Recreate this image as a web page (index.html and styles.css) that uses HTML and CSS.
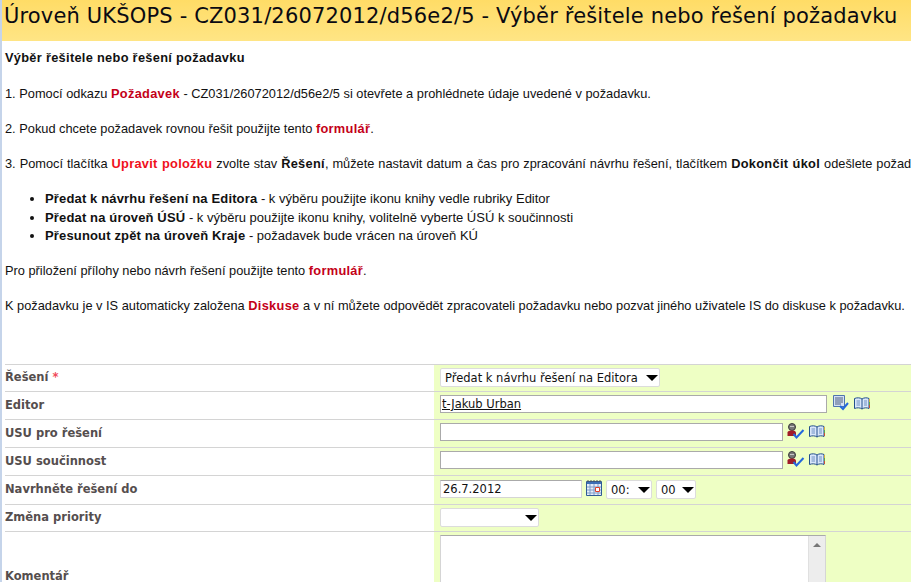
FILE: index.html
```html
<!DOCTYPE html>
<html lang="cs">

<head>
    <meta charset="UTF-8">
    <title>Výběr řešitele nebo řešení požadavku</title>
    <link rel="stylesheet" href="styles.css">
</head>

<body>
    <svg class="defs" width="0" height="0">
        <symbol id="ico-list" viewBox="0 0 17 16">
            <path d="M1.500.5h11v11h-11z" fill="#d3e0f5" stroke="#4f74ad"/>
            <path d="M3 3h8M3 5h8M3 7h8M3 9h6" stroke="#4d5f80"/>
            <path d="M8 11l3 3 5-6" fill="none" stroke="#2468dc" stroke-width="2"/>
        </symbol>
        <symbol id="ico-user" viewBox="0 0 18 16">
            <circle cx="5" cy="4" r="3.500" fill="#777" stroke="#3c3c3c"/>
            <path d="M3 3h4v1H3z" fill="#c8c8c8"/>
            <path d="M.5 13V9.500C.5 8 3 7.500 5 7.500S9 8 9 10v3z" fill="#a01c28"/>
            <path d="M6.500 11l3 3.500 7-7.500" fill="none" stroke="#2468dc" stroke-width="2"/>
        </symbol>
        <symbol id="ico-book" viewBox="0 0 16 13">
            <path d="M.5 1.500C3 .5 6 .5 8 2c2-1.500 5-1.500 7-.5v10c-2-1-5-1-7 .5-2-1.500-5-1.500-7.500-.5z" fill="#d9e6fa" stroke="#234f8c"/>
            <path d="M8 2v10" stroke="#234f8c"/>
            <path d="M2.500 4h3.500M2.500 6h3.500M2.500 8h3.500M10 4h3M10 6h3M10 8h3" stroke="#6f90c2"/>
            <path d="M15 2h1v3h-1z" fill="#d8b13a"/>
            <path d="M15 5h1v3h-1z" fill="#5aa84a"/>
            <path d="M15 8h1v3h-1z" fill="#c8503a"/>
        </symbol>
        <symbol id="ico-cal" viewBox="0 0 16 16">
            <path d="M.5 1.500h15v14H.5z" fill="#e6eefa" stroke="#2f5b96"/>
            <path d="M1 2h14v2H1z" fill="#3e6fb5"/>
            <path d="M2 0v2M5 0v2M8 0v2M11 0v2M14 0v2" stroke="#555"/>
            <path d="M1 7h14M1 10h14M1 13h14M4 4v11M8 4v11M12 4v11" stroke="#7e9cc8"/>
            <path d="M9.500 7.500h4v4h-4z" fill="#fff" stroke="#e0402a"/>
        </symbol>
    </svg>

    <div id="main">
        <h1 class="title">Úroveň UKŠOPS - CZ031/26072012/d56e2/5 - Výběr řešitele nebo řešení požadavku</h1>

        <div class="help">
            <p class="first"><b>Výběr řešitele nebo řešení požadavku</b></p>
            <p>1. Pomocí odkazu <a class="dark">Požadavek</a> - CZ031/26072012/d56e2/5 si otevřete a prohlédnete údaje uvedené v požadavku.</p>
            <p>2. Pokud chcete požadavek rovnou řešit použijte tento <a class="dark">formulář</a>.</p>
            <p class="long">3. Pomocí tlačítka <a class="bright">Upravit položku</a> zvolte stav <b>Řešení</b>, můžete nastavit datum a čas pro zpracování návrhu řešení, tlačítkem <b>Dokončit úkol</b> odešlete požadavek</p>
            <ul>
                <li><b>Předat k návrhu řešení na Editora</b> - k výběru použijte ikonu knihy vedle rubriky Editor</li>
                <li><b>Předat na úroveň ÚSÚ</b> - k výběru použijte ikonu knihy, volitelně vyberte ÚSÚ k součinnosti</li>
                <li><b>Přesunout zpět na úroveň Kraje</b> - požadavek bude vrácen na úroveň KÚ</li>
            </ul>
            <p>Pro přiložení přílohy nebo návrh řešení použijte tento <a class="dark">formulář</a>.</p>
            <p>K požadavku je v IS automaticky založena <a class="dark">Diskuse</a> a v ní můžete odpovědět zpracovateli požadavku nebo pozvat jiného uživatele IS do diskuse k požadavku.</p>
        </div>

        <div class="form">
            <div class="row h27">
                <div class="label">Řešení <span class="req">*</span></div>
                <div class="field">
                    <span class="select w220"><select><option>Předat k návrhu řešení na Editora</option></select></span>
                </div>
            </div>
            <div class="row h28">
                <div class="label">Editor</div>
                <div class="field">
                    <span class="input w387"><a class="person">t-Jakub Urban</a></span>
                    <svg class="icon ml5" width="17" height="16"><use href="#ico-list"/></svg>
                    <svg class="icon ml5 book" width="16" height="13"><use href="#ico-book"/></svg>
                </div>
            </div>
            <div class="row h28">
                <div class="label">USU pro řešení</div>
                <div class="field">
                    <span class="input w343"></span>
                    <svg class="icon ml4" width="18" height="16"><use href="#ico-user"/></svg>
                    <svg class="icon ml4 book" width="16" height="13"><use href="#ico-book"/></svg>
                </div>
            </div>
            <div class="row h28">
                <div class="label">USU součinnost</div>
                <div class="field">
                    <span class="input w343"></span>
                    <svg class="icon ml4" width="18" height="16"><use href="#ico-user"/></svg>
                    <svg class="icon ml4 book" width="16" height="13"><use href="#ico-book"/></svg>
                </div>
            </div>
            <div class="row h29 date">
                <div class="label">Navrhněte řešení do</div>
                <div class="field">
                    <span class="input w142 soft">26.7.2012</span>
                    <svg class="icon ml4" width="16" height="16"><use href="#ico-cal"/></svg>
                    <span class="select w46 ml4"><select><option>00:</option></select></span>
                    <span class="select w40 ml4"><select><option>00</option></select></span>
                </div>
            </div>
            <div class="row h27">
                <div class="label">Změna priority</div>
                <div class="field">
                    <span class="select w99"><select><option></option></select></span>
                </div>
            </div>
            <div class="row last">
                <div class="label">Komentář</div>
                <div class="field">
                    <div class="textarea"><div class="scroll"><i></i></div></div>
                </div>
            </div>
        </div>
    </div>
</body>

</html>
```

FILE: styles.css
```css
html,
body {
    margin: 0;
    padding: 0;
    height: 582px;
    overflow: hidden;
    background: #fff;
}

.defs {
    display: block;
    height: 0;
}

#main {
    width: 909px;
    height: 582px;
    overflow: hidden;
    border-left: 2px solid #c5d4ea;
    font-family: "Liberation Sans", Arial, sans-serif;
    font-size: 12.8px;
    color: #111;
}

.title {
    margin: 0;
    height: 41px;
    padding-left: 2px;
    background: linear-gradient(#ffdc66, #ffe585);
    font-family: "DejaVu Sans", Verdana, sans-serif;
    font-size: 21px;
    font-weight: normal;
    letter-spacing: .16px;
    line-height: 32px;
    color: #0a0a12;
    white-space: nowrap;
    overflow: hidden;
}

.help {
    padding: 8px 0 0 3px;
    height: 323px;
    box-sizing: border-box;
    line-height: 18px;
}

.help p {
    margin: 0 0 17px;
    white-space: nowrap;
}

.help .first {
    margin-bottom: 18px;
}

.help b,
.help a {
    letter-spacing: .3px;
}

.help .long {
    word-spacing: .4px;
}

.help ul {
    margin: 0 0 16px;
    padding-left: 40px;
}

.help li {
    font-size: 13px;
    line-height: 18.500px;
}

.help li b {
    letter-spacing: .15px;
}

.dark {
    color: #c40018;
    font-weight: bold;
}

.bright {
    color: #f0101c;
    font-weight: bold;
}

.form {
    margin-left: 3px;
    font-family: "DejaVu Sans", Verdana, sans-serif;
    font-size: 11.5px;
}

.row {
    display: grid;
    grid-template-columns: 429px 1fr;
    box-sizing: border-box;
    border-top: 1px solid #d4d4d4;
}

.h27 {
    height: 27px;
}

.h28 {
    height: 28px;
}

.h29 {
    height: 29px;
}

.last {
    height: 90px;
}

.label {
    display: flex;
    align-items: center;
    gap: 4px;
    color: #554e4e;
    font-weight: bold;
    padding-bottom: 2px;
}

.req {
    color: #f04a5a;
}

.field {
    display: flex;
    align-items: flex-start;
    padding: 3px 0 0 6px;
    background: #eeffc4;
    color: #111;
}

.date .field {
    padding-top: 4px;
}

.icon {
    flex: none;
}

.book {
    margin-top: 2px;
}

.ml4 {
    margin-left: 4px;
}

.ml5 {
    margin-left: 5px;
}

.input {
    display: block;
    box-sizing: border-box;
    height: 18px;
    line-height: 17px;
    background: #fff;
    border: 1px solid #aaa;
    padding-left: 1px;
}

.input.soft {
    border-color: #d5d5d5;
    border-top-color: #aaa;
    padding-left: 2px;
}

.person {
    color: #111;
    text-decoration: underline;
}

.w387 {
    width: 387px;
}

.w343 {
    width: 343px;
}

.w142 {
    width: 142px;
}

.select {
    display: block;
    position: relative;
    height: 19px;
}

.select select {
    appearance: none;
    display: block;
    width: 100%;
    height: 19px;
    margin: 0;
    padding: 0 0 0 4px;
    background: #fff;
    border: 1px solid #dcdcdc;
    border-radius: 2px;
    font-family: inherit;
    font-size: 11.5px;
    color: #111;
}

/* sipka selectu */
.select::after {
    content: "";
    position: absolute;
    right: 2px;
    top: 7px;
    border-left: 6px solid transparent;
    border-right: 6px solid transparent;
    border-top: 6px solid #000;
}

.w220 {
    width: 220px;
}

.w99 {
    width: 99px;
}

.w46 {
    width: 46px;
}

.w40 {
    width: 40px;
}

.textarea {
    position: relative;
    box-sizing: border-box;
    width: 386px;
    height: 80px;
    background: #fff;
    border: 1px solid #d5d5d5;
    border-top-color: #aaa;
}

.scroll {
    position: absolute;
    top: 0;
    right: 0;
    bottom: 0;
    width: 16px;
    background: #ededed;
    border-left: 1px solid #e0e0e0;
}

.scroll i {
    position: absolute;
    top: 7px;
    left: 4px;
    border-left: 4px solid transparent;
    border-right: 4px solid transparent;
    border-bottom: 4px solid #777;
}
```
